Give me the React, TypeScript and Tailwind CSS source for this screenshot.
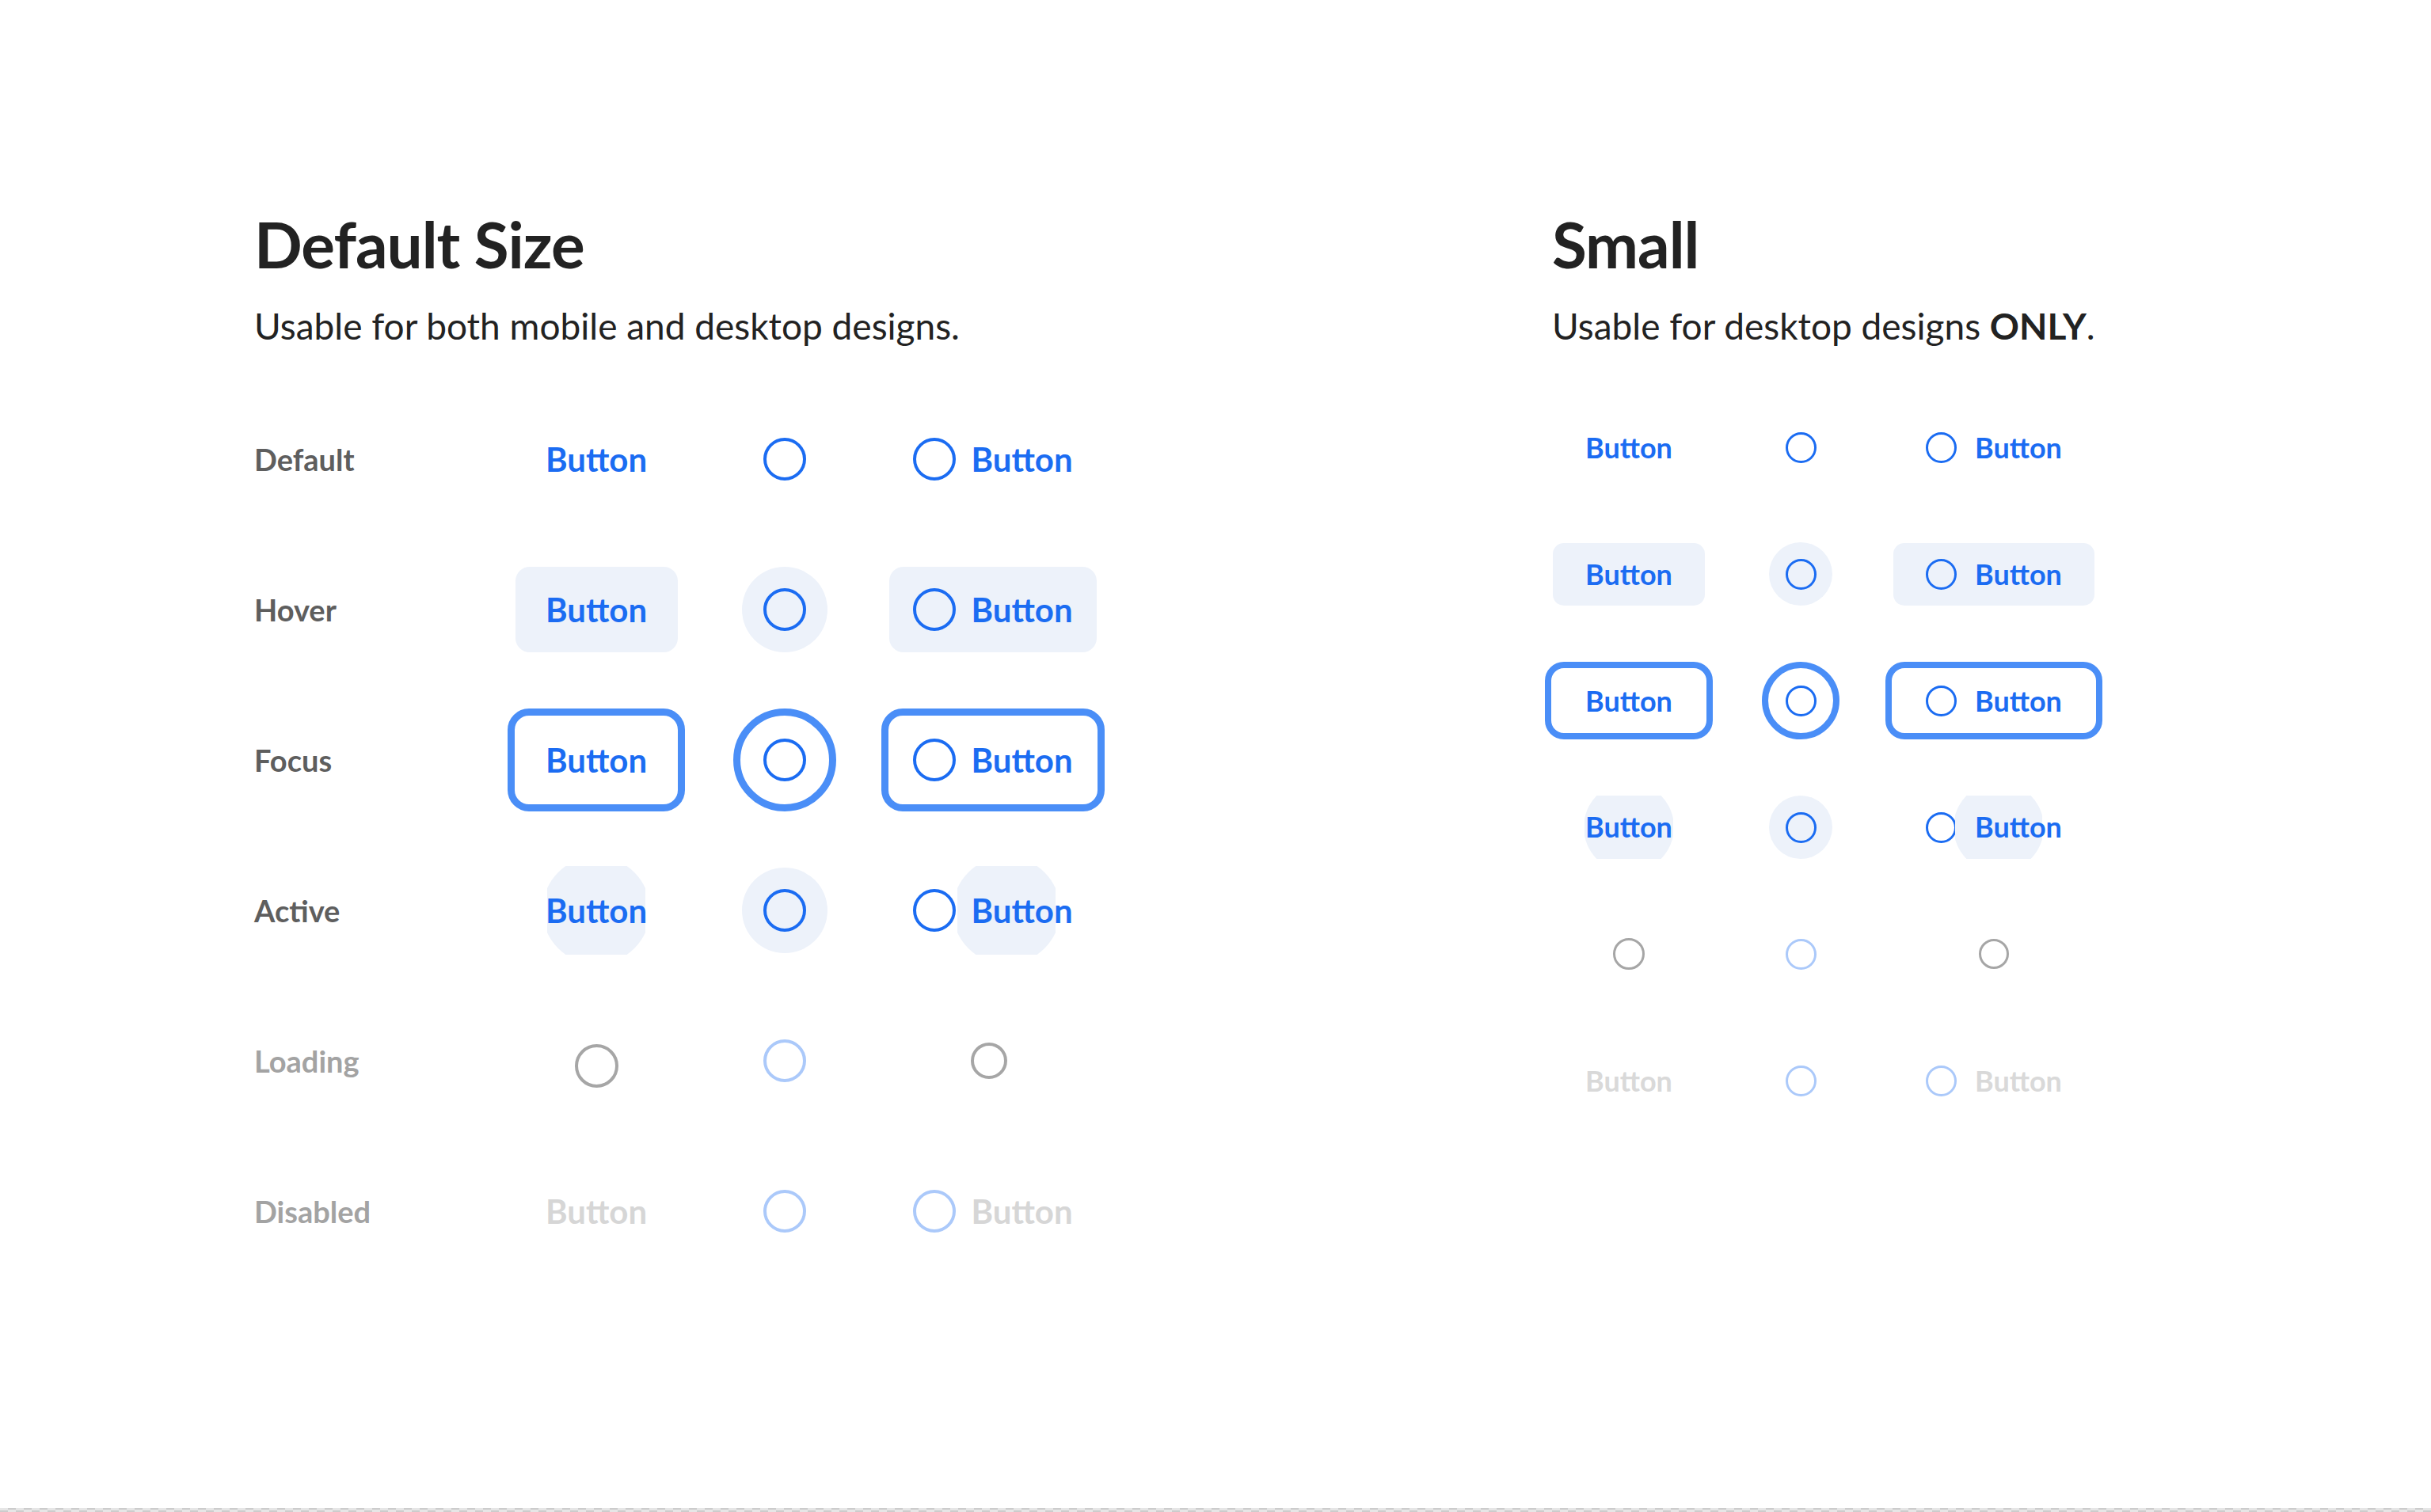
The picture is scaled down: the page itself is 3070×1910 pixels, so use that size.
import React from 'react'

type State = 'default' | 'hover' | 'focus' | 'active' | 'loading' | 'disabled'

const states: { key: State; label: string }[] = [
  { key: 'default', label: 'Default' },
  { key: 'hover', label: 'Hover' },
  { key: 'focus', label: 'Focus' },
  { key: 'active', label: 'Active' },
  { key: 'loading', label: 'Loading' },
  { key: 'disabled', label: 'Disabled' },
]

// --- default size pieces ---

function BigIcon({ muted }: { muted?: boolean }) {
  return (
    <span
      className={
        muted
          ? 'block h-[54px] w-[54px] shrink-0 rounded-full border-[4px] border-[#abc9fa]'
          : 'block h-[54px] w-[54px] shrink-0 rounded-full border-[4px] border-[#1b6cf2]'
      }
    />
  )
}

function BigLabel({ muted }: { muted?: boolean }) {
  return (
    <span
      className={
        muted
          ? 'relative text-[42px] leading-none font-bold text-[#d6d6d6]'
          : 'relative text-[42px] leading-none font-bold text-[#1b6cf2]'
      }
    >
      Button
    </span>
  )
}

function BigRipple({ offset }: { offset?: boolean }) {
  return (
    <span
      className={
        offset
          ? 'absolute top-1/2 -left-[17px] h-[112px] w-[124px] -translate-y-1/2 overflow-hidden'
          : 'absolute top-1/2 left-1/2 h-[112px] w-[124px] -translate-x-1/2 -translate-y-1/2 overflow-hidden'
      }
    >
      <span className="absolute top-1/2 left-1/2 h-[136px] w-[136px] -translate-x-1/2 -translate-y-1/2 rounded-full bg-[#edf2fa]" />
    </span>
  )
}

function BigText({ state }: { state: State }) {
  if (state === 'loading') {
    return <span className="mt-[12px] block h-[55px] w-[55px] shrink-0 rounded-full border-[4px] border-[#a6a6a6]" />
  }
  if (state === 'focus') {
    return (
      <div className="flex h-[130px] w-[224px] shrink-0 items-center justify-center rounded-[27px] border-[9px] border-[#4a8ef7] bg-white">
        <BigLabel />
      </div>
    )
  }
  if (state === 'active') {
    return (
      <div className="flex h-[108px] w-[205px] shrink-0 items-center justify-center">
        <span className="relative">
          <BigRipple />
          <BigLabel />
        </span>
      </div>
    )
  }
  return (
    <div
      className={
        state === 'hover'
          ? 'flex h-[108px] w-[205px] shrink-0 items-center justify-center rounded-[18px] bg-[#edf2fa]'
          : 'flex h-[108px] w-[205px] shrink-0 items-center justify-center'
      }
    >
      <BigLabel muted={state === 'disabled'} />
    </div>
  )
}

function BigIconButton({ state }: { state: State }) {
  if (state === 'loading' || state === 'disabled') {
    return <BigIcon muted />
  }
  if (state === 'focus') {
    return (
      <div className="flex h-[130px] w-[130px] shrink-0 items-center justify-center rounded-full border-[9px] border-[#4a8ef7] bg-white">
        <BigIcon />
      </div>
    )
  }
  return (
    <div
      className={
        state === 'hover' || state === 'active'
          ? 'flex h-[108px] w-[108px] shrink-0 items-center justify-center rounded-full bg-[#edf2fa]'
          : 'flex h-[108px] w-[108px] shrink-0 items-center justify-center'
      }
    >
      <BigIcon />
    </div>
  )
}

function BigIconText({ state }: { state: State }) {
  if (state === 'loading') {
    return <span className="mr-[10px] block h-[46px] w-[46px] shrink-0 rounded-full border-[4px] border-[#a6a6a6]" />
  }
  if (state === 'focus') {
    return (
      <div className="flex h-[130px] w-[282px] shrink-0 items-center justify-center gap-[19px] rounded-[27px] border-[9px] border-[#4a8ef7] bg-white">
        <BigIcon />
        <BigLabel />
      </div>
    )
  }
  if (state === 'active') {
    return (
      <div className="flex h-[108px] w-[262px] shrink-0 items-center justify-center gap-[19px]">
        <BigIcon />
        <span className="relative">
          <BigRipple offset />
          <BigLabel />
        </span>
      </div>
    )
  }
  return (
    <div
      className={
        state === 'hover'
          ? 'flex h-[108px] w-[262px] shrink-0 items-center justify-center gap-[19px] rounded-[18px] bg-[#edf2fa]'
          : 'flex h-[108px] w-[262px] shrink-0 items-center justify-center gap-[19px]'
      }
    >
      <BigIcon muted={state === 'disabled'} />
      <BigLabel muted={state === 'disabled'} />
    </div>
  )
}

// --- small size pieces ---

function SmallIcon({ muted }: { muted?: boolean }) {
  return (
    <span
      className={
        muted
          ? 'block h-[39px] w-[39px] shrink-0 rounded-full border-[3px] border-[#abc9fa]'
          : 'block h-[39px] w-[39px] shrink-0 rounded-full border-[3px] border-[#1b6cf2]'
      }
    />
  )
}

function SmallLabel({ muted }: { muted?: boolean }) {
  return (
    <span
      className={
        muted
          ? 'relative text-[36px] leading-none font-bold text-[#d9d9d9]'
          : 'relative text-[36px] leading-none font-bold text-[#1b6cf2]'
      }
    >
      Button
    </span>
  )
}

function SmallRipple({ offset }: { offset?: boolean }) {
  return (
    <span
      className={
        offset
          ? 'absolute top-1/2 -left-[25px] h-[80px] w-[110px] -translate-y-1/2 overflow-hidden'
          : 'absolute top-1/2 left-1/2 h-[80px] w-[112px] -translate-x-1/2 -translate-y-1/2 overflow-hidden'
      }
    >
      <span className="absolute top-1/2 left-1/2 h-[114px] w-[114px] -translate-x-1/2 -translate-y-1/2 rounded-full bg-[#edf2fa]" />
    </span>
  )
}

function SmallText({ state }: { state: State }) {
  if (state === 'loading') {
    return <span className="block h-[40px] w-[40px] shrink-0 rounded-full border-[3px] border-[#a6a6a6]" />
  }
  if (state === 'focus') {
    return (
      <div className="flex h-[98px] w-[212px] shrink-0 items-center justify-center rounded-[24px] border-[8px] border-[#4a8ef7] bg-white">
        <SmallLabel />
      </div>
    )
  }
  if (state === 'active') {
    return (
      <div className="flex h-[79px] w-[192px] shrink-0 items-center justify-center">
        <span className="relative">
          <SmallRipple />
          <SmallLabel />
        </span>
      </div>
    )
  }
  return (
    <div
      className={
        state === 'hover'
          ? 'flex h-[79px] w-[192px] shrink-0 items-center justify-center rounded-[14px] bg-[#edf2fa]'
          : 'flex h-[79px] w-[192px] shrink-0 items-center justify-center'
      }
    >
      <SmallLabel muted={state === 'disabled'} />
    </div>
  )
}

function SmallIconButton({ state }: { state: State }) {
  if (state === 'loading' || state === 'disabled') {
    return <SmallIcon muted />
  }
  if (state === 'focus') {
    return (
      <div className="flex h-[98px] w-[98px] shrink-0 items-center justify-center rounded-full border-[8px] border-[#4a8ef7] bg-white">
        <SmallIcon />
      </div>
    )
  }
  return (
    <div
      className={
        state === 'hover' || state === 'active'
          ? 'flex h-[80px] w-[80px] shrink-0 items-center justify-center rounded-full bg-[#edf2fa]'
          : 'flex h-[80px] w-[80px] shrink-0 items-center justify-center'
      }
    >
      <SmallIcon />
    </div>
  )
}

function SmallIconText({ state }: { state: State }) {
  if (state === 'loading') {
    return <span className="block h-[38px] w-[38px] shrink-0 rounded-full border-[3px] border-[#a6a6a6]" />
  }
  if (state === 'focus') {
    return (
      <div className="flex h-[98px] w-[274px] shrink-0 items-center justify-center gap-[23px] rounded-[24px] border-[8px] border-[#4a8ef7] bg-white">
        <SmallIcon />
        <SmallLabel />
      </div>
    )
  }
  if (state === 'active') {
    return (
      <div className="flex h-[79px] w-[254px] shrink-0 items-center justify-center gap-[23px]">
        <SmallIcon />
        <span className="relative">
          <SmallRipple offset />
          <SmallLabel />
        </span>
      </div>
    )
  }
  return (
    <div
      className={
        state === 'hover'
          ? 'flex h-[79px] w-[254px] shrink-0 items-center justify-center gap-[23px] rounded-[14px] bg-[#edf2fa]'
          : 'flex h-[79px] w-[254px] shrink-0 items-center justify-center gap-[23px]'
      }
    >
      <SmallIcon muted={state === 'disabled'} />
      <SmallLabel muted={state === 'disabled'} />
    </div>
  )
}

export default function App() {
  return (
    <div className="flex h-[1910px] w-[3070px] flex-col bg-white font-['Lato','Noto_Sans',sans-serif] text-[#222222]">
      <div className="flex flex-1 pt-[268px]">
        {/* default size */}
        <section className="ml-[321px] w-[1639px]">
          <h1 className="text-[80px] leading-none font-bold tracking-[-1px] text-[#222222]">Default Size</h1>
          <p className="mt-[36px] text-[46px] leading-[55px] text-[#222222]">
            Usable for both mobile and desktop designs.
          </p>

          <div className="mt-[46px] flex flex-col">
            {states.map((s) => (
              <div key={s.key} className="flex h-[190px] items-center">
                <div
                  className={
                    s.key === 'loading' || s.key === 'disabled'
                      ? 'w-[300px] text-[38px] font-bold text-[#a3a3a3]'
                      : 'w-[300px] text-[38px] font-bold text-[#5e5e5e]'
                  }
                >
                  {s.label}
                </div>
                <div className="flex w-[264px] justify-center">
                  <BigText state={s.key} />
                </div>
                <div className="flex w-[212px] justify-center">
                  <BigIconButton state={s.key} />
                </div>
                <div className="flex w-[314px] justify-center">
                  <BigIconText state={s.key} />
                </div>
              </div>
            ))}
          </div>
        </section>

        {/* small */}
        <section className="flex-1">
          <h1 className="text-[80px] leading-none font-bold tracking-[-1px] text-[#222222]">Small</h1>
          <p className="mt-[36px] text-[46px] leading-[55px] text-[#222222]">
            Usable for desktop designs <span className="font-bold">ONLY</span>.
          </p>

          <div className="mt-[46px] flex flex-col">
            {states.map((s) => (
              <div key={s.key} className="flex h-[160px] items-center">
                <div className="flex w-[194px] justify-center">
                  <SmallText state={s.key} />
                </div>
                <div className="flex w-[240px] justify-center">
                  <SmallIconButton state={s.key} />
                </div>
                <div className="flex w-[248px] justify-center">
                  <SmallIconText state={s.key} />
                </div>
              </div>
            ))}
          </div>
        </section>
      </div>

      <div className="h-[5px] w-full bg-[repeating-conic-gradient(#cccccc_0_25%,#e6e6e6_0_50%)] bg-[length:20px_5px]" />
    </div>
  )
}
